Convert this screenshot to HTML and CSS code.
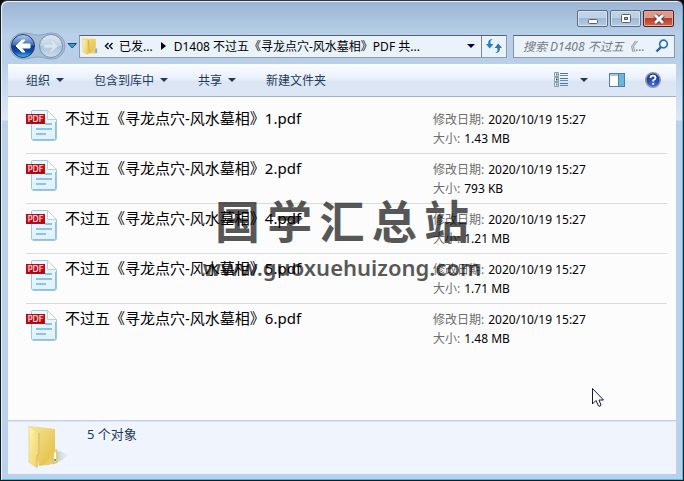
FILE: index.html
```html
<!DOCTYPE html>
<html lang="zh-CN">
<head>
<meta charset="utf-8">
<title>D1408</title>
<link rel="stylesheet" href="styles.css">
</head>
<body>
<svg class="defs" aria-hidden="true">
  <defs>
    <linearGradient id="paper" x1="0" y1="0" x2="0" y2="1"><stop offset="0" stop-color="#eef7fc"/><stop offset="1" stop-color="#dff2fc"/></linearGradient>
    <linearGradient id="red" x1="0" y1="0" x2="0" y2="1"><stop offset="0" stop-color="#e01c28"/><stop offset="1" stop-color="#a80008"/></linearGradient>
    <linearGradient id="flap" x1="0" y1="0" x2="1" y2="1"><stop offset="0" stop-color="#fff4b0"/><stop offset="1" stop-color="#edcf62"/></linearGradient>
    <linearGradient id="back" x1="0" y1="0" x2="1" y2="1"><stop offset="0" stop-color="#f6e49a"/><stop offset="0.7" stop-color="#e8c653"/><stop offset="1" stop-color="#f3df8e"/></linearGradient>
    <linearGradient id="shade" x1="0" y1="0" x2="1" y2="0"><stop offset="0" stop-color="#8a8f99"/><stop offset="1" stop-color="#8a8f99" stop-opacity="0"/></linearGradient>
    <linearGradient id="orb" x1="0" y1="0" x2="0" y2="1"><stop offset="0" stop-color="#b4cff0"/><stop offset="0.45" stop-color="#3c70bd"/><stop offset="0.5" stop-color="#0c3a94"/><stop offset="0.75" stop-color="#0f4cad"/><stop offset="1" stop-color="#3fc5fa"/></linearGradient>
    <linearGradient id="glass" x1="0" y1="0" x2="0" y2="1"><stop offset="0" stop-color="#dce8f4"/><stop offset="0.48" stop-color="#c3d4e6"/><stop offset="0.52" stop-color="#a9c0d8"/><stop offset="1" stop-color="#cfe0f0"/></linearGradient>
    <radialGradient id="help" cx="0.5" cy="0.8" r="0.7"><stop offset="0" stop-color="#3f70df"/><stop offset="1" stop-color="#173490"/></radialGradient>
    <symbol id="pdf" viewBox="0 0 32 32">
      <path d="M6.500 1.500H21.500L30.500 10.500V29Q30.500 31.500 28 31.500H8Q5.500 31.500 5.500 29V3Q5.500 1.500 6.500 1.500Z" fill="url(#paper)" stroke="#9fc6da"/>
      <path d="M7 30.500H28.500Q29.500 30.500 29.500 29V13" fill="none" stroke="#8fc0df"/>
      <path d="M21.500 1.500V10.500H30.500Z" fill="#fff" stroke="#b5d2df"/>
      <path d="M19 15H26M10 20H26M10 25H20" stroke="#8fc1e9" stroke-width="2"/>
      <rect x="0.500" y="5.500" width="18" height="9" fill="url(#red)" stroke="#b0101a"/>
      <text x="9.500" y="13" text-anchor="middle" class="pdf-label">PDF</text>
    </symbol>
  </defs>
</svg>
<main class="window">
  <header class="titlebar">
    <button class="caption" aria-label="最小化"><svg width="12" height="12"><rect x="1.500" y="6.500" width="9" height="4" rx="1" fill="#fff" stroke="#53606f"/></svg></button>
    <button class="caption" aria-label="最大化"><svg width="12" height="12"><rect x="1.500" y="1.500" width="9" height="8" rx="1" fill="#fff" stroke="#53606f"/><rect x="4.500" y="4.500" width="3" height="2" fill="#8fabc9" stroke="#53606f"/></svg></button>
    <button class="caption close" aria-label="关闭"><svg width="12" height="12"><path d="M2 2L10 10M10 2L2 10" stroke="#52343c" stroke-width="4.500"/><path d="M2 2L10 10M10 2L2 10" stroke="#fff" stroke-width="2.800"/></svg></button>
  </header>
  <nav class="navigation">
    <div class="travel">
      <svg class="orbs" width="58" height="28" viewBox="0 0 58 28">
        <path d="M14 1C22 1 24 3 30 3S37 1 43 1A13 13 0 0 1 43 27C37 27 35 25 29 25S21 27 14 27A13 13 0 0 1 14 1Z" fill="#a4bcd6" stroke="#8ca5c0"/>
        <circle cx="14" cy="14" r="11.500" fill="url(#orb)" stroke="#263c68"/>
        <path d="M7 14L13 8H16L12.500 12H21V16H12.500L16 20H13Z" fill="#fff" stroke="#fff"/>
        <circle cx="42" cy="14" r="11.500" fill="url(#glass)" stroke="#7a90a9"/>
        <path d="M49 14L43 8H40L43.500 12H35V16H43.500L40 20H43Z" fill="#d9e6f2" stroke="#c2d2e2"/>
      </svg>
      <button class="overlay back" aria-label="后退"></button>
      <button class="overlay forward" aria-label="前进"></button>
    </div>
    <button class="plain recent" aria-label="最近浏览"><svg width="11" height="8"><path d="M1 1.500H9.500L5.250 6Z" fill="#35a0df" stroke="#24466e"/></svg></button>
    <div class="address">
      <svg class="small-folder" width="16" height="18" viewBox="0 0 42 44" preserveAspectRatio="none"><path d="M3 3L36 4V27L38 29V39L12 41Z" fill="url(#back)"/><path d="M2 2L14 9V43L2 36Z" fill="url(#flap)" stroke="#e1c465"/><path d="M17 8L19 37" stroke="#c9a53e" stroke-width="2"/><rect x="32" y="27" width="8" height="13" fill="#e7cd70"/><rect x="35" y="29" width="4" height="10" fill="#50bdf7"/></svg>
      <button class="plain root" aria-label="上级位置"><svg width="10" height="8"><path d="M4.500 1L1.500 4L4.500 7M8.500 1L5.500 4L8.500 7" fill="none" stroke="#111" stroke-width="1.500"/></svg></button>
      <button class="plain">已发...</button>
      <svg class="separator" width="5" height="8"><path d="M0 0L5 4L0 8Z" fill="#000"/></svg>
      <button class="plain location">D1408 不过五《寻龙点穴-风水墓相》PDF 共...</button>
      <button class="plain history" aria-label="历史"><svg width="8" height="5"><path d="M0 0H8L4 4Z" fill="#00004f"/></svg></button>
      <button class="plain refresh" aria-label="刷新"><svg width="16" height="16"><path d="M7 1Q3.500 2 4.800 6H7.500L3.700 10.500L0 6H2.200Q1.500 1 7 1Z" fill="#2480c8"/><path d="M9 15Q12.500 14 11.200 10H8.500L12.300 5.500L16 10H13.800Q14.500 15 9 15Z" fill="#2f72be"/></svg></button>
    </div>
    <label class="search">
      <input type="text" aria-label="搜索" placeholder="搜索 D1408 不过五《...">
      <svg width="14" height="14"><circle cx="8.500" cy="5" r="3.800" fill="#eff7ff" stroke="#2e6ec0" stroke-width="1.700"/><path d="M6 8L1.500 12.500" stroke="#2460ae" stroke-width="2.400"/></svg>
    </label>
  </nav>
  <section class="content">
    <div class="toolbar">
      <button class="plain">组织<span class="arrow"></span></button>
      <button class="plain">包含到库中<span class="arrow"></span></button>
      <button class="plain">共享<span class="arrow"></span></button>
      <button class="plain">新建文件夹</button>
      <div class="tools">
        <button class="plain" aria-label="更改视图"><svg width="14" height="16"><path d="M.5.500H4.500V4.500H.5ZM.5 5.500H4.500V9.500H.5ZM.5 10.500H4.500V14.500H.5Z" fill="#fff" stroke="#8c9aac"/><path d="M2 2.500H3.500" stroke="#158b55" stroke-width="2"/><path d="M2 7.500H3.500" stroke="#1c3560" stroke-width="2"/><path d="M2 12.500H3.500" stroke="#278d94" stroke-width="2"/><path d="M6 1.500H14M6 6.500H14M6 11.500H14" stroke="#52719e"/><path d="M6 3.500H14M6 8.500H14M6 13.500H14" stroke="#5f87cc"/></svg></button>
        <button class="plain views" aria-label="更多选项"><span class="arrow"></span></button>
        <button class="plain preview" aria-label="预览窗格"><svg width="16" height="14"><rect x=".5" y=".5" width="15" height="13" fill="#fff" stroke="#577ba6"/><path d="M1 2H15" stroke="#aac4df" stroke-width="2"/><rect x="10" y="1" width="5" height="12" fill="#65b9d9"/><path d="M9.500 1V13" stroke="#577ba6"/></svg></button>
        <button class="plain" aria-label="帮助"><svg width="16" height="16"><circle cx="8" cy="8" r="7.200" fill="url(#help)" stroke="#9297a5" stroke-width="1.600"/><path d="M5.500 6Q5.500 3.700 8 3.700T10.500 6Q10.500 7.200 8.200 8.300V9.600" fill="none" stroke="#fff" stroke-width="1.800"/><circle cx="8.200" cy="11.800" r="1.100" fill="#fff"/></svg></button>
      </div>
    </div>
    <ul class="files">
      <li class="file"><svg class="file-icon"><use href="#pdf"/></svg><span class="name">不过五《寻龙点穴-风水墓相》1.pdf</span><dl><div><dt>修改日期:</dt><dd>2020/10/19 15:27</dd></div><div><dt>大小:</dt><dd>1.43 MB</dd></div></dl></li>
      <li class="file"><svg class="file-icon"><use href="#pdf"/></svg><span class="name">不过五《寻龙点穴-风水墓相》2.pdf</span><dl><div><dt>修改日期:</dt><dd>2020/10/19 15:27</dd></div><div><dt>大小:</dt><dd>793 KB</dd></div></dl></li>
      <li class="file"><svg class="file-icon"><use href="#pdf"/></svg><span class="name">不过五《寻龙点穴-风水墓相》4.pdf</span><dl><div><dt>修改日期:</dt><dd>2020/10/19 15:27</dd></div><div><dt>大小:</dt><dd>1.21 MB</dd></div></dl></li>
      <li class="file"><svg class="file-icon"><use href="#pdf"/></svg><span class="name">不过五《寻龙点穴-风水墓相》5.pdf</span><dl><div><dt>修改日期:</dt><dd>2020/10/19 15:27</dd></div><div><dt>大小:</dt><dd>1.71 MB</dd></div></dl></li>
      <li class="file"><svg class="file-icon"><use href="#pdf"/></svg><span class="name">不过五《寻龙点穴-风水墓相》6.pdf</span><dl><div><dt>修改日期:</dt><dd>2020/10/19 15:27</dd></div><div><dt>大小:</dt><dd>1.48 MB</dd></div></dl></li>
    </ul>
    <footer class="details">
      <svg width="42" height="44" viewBox="0 0 42 44"><path d="M18 40L31 26L41 30Q32 38 18 40Z" fill="url(#shade)" opacity=".7"/><path d="M3 1L27 4V26L30 28V38L11 41Z" fill="url(#back)"/><path d="M1 1L11 8V29L9 31V43L1 37Z" fill="url(#flap)" stroke="#ecd98d"/><path d="M11 8V29L9 31V42" fill="none" stroke="#d7b650"/><path d="M25 27L27 25H29V37L25 39Z" fill="#f4df8d" stroke="#d9bd61"/><rect x="26" y="28" width="2" height="8" fill="#fff"/><rect x="26" y="34" width="2" height="2" fill="#4ba8ec"/></svg>
      <span>5 个对象</span>
    </footer>
  </section>
  <div class="watermark">
    <div class="site"><span>国</span><span>学</span><span>汇</span><span>总</span><span>站</span></div>
    <div class="domain">www.guoxuehuizong.com</div>
  </div>
  <svg class="cursor" width="13" height="20"><path d="M.5.500V16L4 12.500L6.500 18Q8.500 19 9 17L7 12H11.500Z" fill="#fff" stroke="#141733"/></svg>
</main>
</body>
</html>
```
FILE: styles.css
```css
* { box-sizing: border-box; }
body {
  margin: 0;
  background: #05080c;
  color: #000;
  font: 12px/19px "Noto Sans", "Noto Sans CJK SC", sans-serif;
}
button, input { font: inherit; color: inherit; }
.defs { position: absolute; width: 0; height: 0; }
.window {
  position: relative;
  display: flex;
  flex-direction: column;
  min-height: 100vh;
  padding: 0 6px 6px;
  border: 1px solid #17191d;
  border-top-color: #35343c;
  border-radius: 7px 7px 0 0;
  background: linear-gradient(#9ab4d2, #b8d0e9 34px, #b8cfe9 60px, #dce9f7 119px, #b9d1ea 120px);
  box-shadow: inset 1px 1px #e8f2fb, inset -1px -1px #35c4e7;
}
.titlebar {
  display: flex;
  justify-content: flex-end;
  gap: 2px;
  padding: 9px 3px 7px;
}
.caption {
  display: grid;
  place-items: center;
  width: 31px;
  height: 17px;
  padding: 0;
  border: 1px solid #5b6d84;
  border-radius: 2px;
  background: linear-gradient(#bfd1e5 45%, #9fb8d3 50%, #b5cde5);
  box-shadow: inset 0 0 0 1px #d5e3f1;
}
.close {
  border-color: #561d22;
  background: linear-gradient(#dc9a8d 45%, #b83b27 50%, #cf6b4b);
  box-shadow: inset 0 0 0 1px #e3aaa0;
}
.navigation {
  display: flex;
  align-items: center;
  height: 24px;
  margin: 0 2px 6px;
}
.plain {
  display: flex;
  align-items: center;
  padding: 0;
  border: 0;
  background: none;
  white-space: nowrap;
}
.travel { position: relative; width: 56px; height: 28px; }
.orbs { display: block; }
.overlay {
  position: absolute;
  top: 2px;
  width: 24px;
  height: 24px;
  border: 0;
  border-radius: 50%;
  background: transparent;
}
.back { left: 2px; }
.forward { left: 30px; }
.recent { justify-content: center; width: 14px; }
.address, .search {
  display: flex;
  align-items: center;
  height: 23px;
  border: 1px solid #8b98a7;
  border-top-color: #53606d;
  background: #eaf2fa;
}
.address { flex: 1; min-width: 0; }
.small-folder { margin: 0 6px 0 2px; }
.root { margin-right: 5px; }
.separator { margin: 0 8px; }
.location { flex: 1; min-width: 0; overflow: hidden; }
.history { justify-content: center; width: 20px; align-self: stretch; }
.refresh {
  justify-content: center;
  width: 25px;
  align-self: stretch;
  border-left: 1px solid #7a8794;
}
.search {
  width: 162px;
  margin-left: 6px;
  padding: 0 5px 0 9px;
}
.search input {
  flex: 1;
  min-width: 0;
  padding: 0;
  border: 0;
  outline: 0;
  background: none;
  font-style: italic;
}
.search input::placeholder { color: #747b83; opacity: 1; }
.content {
  display: flex;
  flex: 1;
  flex-direction: column;
  margin: 0 1px;
  background: #fcfcfc;
}
.toolbar {
  display: flex;
  align-items: center;
  gap: 30px;
  height: 33px;
  padding: 0 15px 0 18px;
  border-bottom: 1px solid #a1afca;
  background: linear-gradient(#fafcff, #eaf1fb 45%, #dbe5f4 55%, #dce6f4);
  color: #1e395b;
}
.toolbar .plain { gap: 6px; }
.arrow {
  border: 4px solid transparent;
  border-top-color: #1e395b;
  border-bottom: 0;
}
.tools { display: flex; align-items: center; margin-left: auto; }
.views { margin: 0 21px 0 12px; }
.preview { margin-right: 20px; }
.files {
  flex: 1;
  margin: 0;
  padding: 7px 9px 0 18px;
  list-style: none;
}
.file {
  display: grid;
  grid-template-columns: 32px 1fr 234px;
  column-gap: 7px;
  height: 50px;
  padding-top: 5px;
  border-bottom: 1px solid #dadbdc;
}
.file:last-child { border-bottom: 0; }
.file-icon { width: 32px; height: 32px; }
.pdf-label { font: 8px "DejaVu Sans", sans-serif; fill: #fff; }
.name { font-size: 15px; white-space: nowrap; }
dl { margin: 0; padding-top: 1px; }
dl div { display: flex; gap: 4px; }
dt { color: #6d6d6d; }
dd { margin: 0; }
.details {
  display: flex;
  gap: 17px;
  height: 54px;
  padding: 4px 20px;
  border-top: 1px solid #c0d0e5;
  background: #f0f4fc;
  box-shadow: inset 0 1px #dce6f3;
  color: #1e395b;
  font-size: 13px;
}
.watermark {
  position: absolute;
  top: 191px;
  left: 50%;
  width: 284px;
  margin-left: -142px;
  color: #000;
  opacity: .65;
  font-weight: 700;
  pointer-events: none;
}
.site {
  display: flex;
  justify-content: space-between;
  padding: 0 15px;
  font-size: 45px;
  line-height: 60px;
}
.domain { font-size: 22px; font-weight: 600; line-height: 30px; text-align: center; white-space: nowrap; }
.cursor { position: absolute; right: 78px; bottom: 72px; }
```
